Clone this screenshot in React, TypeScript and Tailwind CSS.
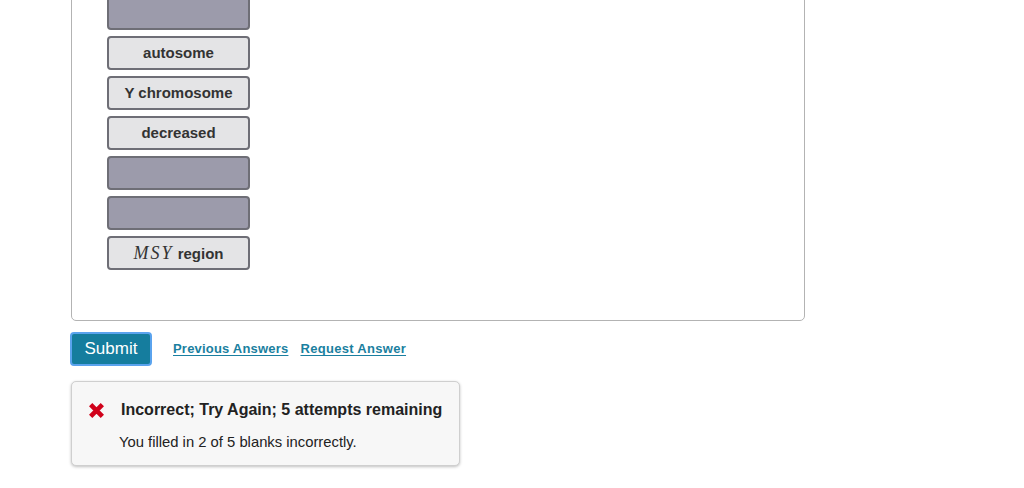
import React from 'react';

type Tile = { label?: React.ReactNode; empty?: boolean };

const tiles: Tile[] = [
  { empty: true },
  { label: 'autosome' },
  { label: 'Y chromosome' },
  { label: 'decreased' },
  { empty: true },
  { empty: true },
  {
    label: (
      <span>
        <span className="italic text-[18px] font-normal tracking-[2px]" style={{ fontFamily: '"Liberation Serif", serif' }}>
          MSY
        </span>
        {' region'}
      </span>
    ),
  },
];

const App: React.FC = () => {
  return (
    <div className="w-[1024px] h-[488px] bg-white overflow-hidden" style={{ fontFamily: '"Liberation Sans", Arial, sans-serif' }}>
      <div className="ml-[71px] w-[734px] h-[342px] -mt-[21px] border border-[#b3b3b3] rounded-[5px] pt-[16px] pl-[35px]">
        <div className="flex flex-col gap-[6px]">
          {tiles.map((t, i) => (
            <div
              key={i}
              className={`w-[143px] h-[34px] rounded-[4px] border-2 border-[#6e6e76] flex items-center justify-center text-[15px] font-bold text-[#333] ${
                t.empty ? 'bg-[#9c9bab]' : 'bg-[#e4e4e6]'
              }`}
            >
              {t.label}
            </div>
          ))}
        </div>
      </div>

      <div className="ml-[70px] mt-[11px] flex items-center">
        <button className="w-[82px] h-[34px] rounded-[4px] bg-[#157d9e] border-2 border-[#5aa3ee] text-white text-[17px] flex items-center justify-center">
          Submit
        </button>
        <a className="ml-[21px] text-[13px] tracking-[0.2px] font-bold text-[#1a7fa0] underline underline-offset-2">Previous Answers</a>
        <a className="ml-[12px] text-[13px] tracking-[0.3px] font-bold text-[#1a7fa0] underline underline-offset-2">Request Answer</a>
      </div>

      <div className="ml-[71px] mt-[15px] w-[389px] h-[85px] bg-[#f7f7f7] border border-[#cfcfcf] rounded-[5px] shadow-[0_1px_3px_rgba(0,0,0,0.25)] pl-[16px] pt-[16px]">
        <div className="flex items-center">
          <svg width="17" height="17" viewBox="0 0 16 16" className="mr-[16px]">
            <path d="M2.5 2.5 L13.5 13.5 M13.5 2.5 L2.5 13.5" stroke="#d0021b" strokeWidth="4.4" strokeLinecap="butt" />
          </svg>
          <span className="text-[16px] font-bold text-[#222]">Incorrect; Try Again; 5 attempts remaining</span>
        </div>
        <div className="ml-[31px] mt-[9px] text-[14.8px] text-[#222]">You filled in 2 of 5 blanks incorrectly.</div>
      </div>
    </div>
  );
};

export default App;
